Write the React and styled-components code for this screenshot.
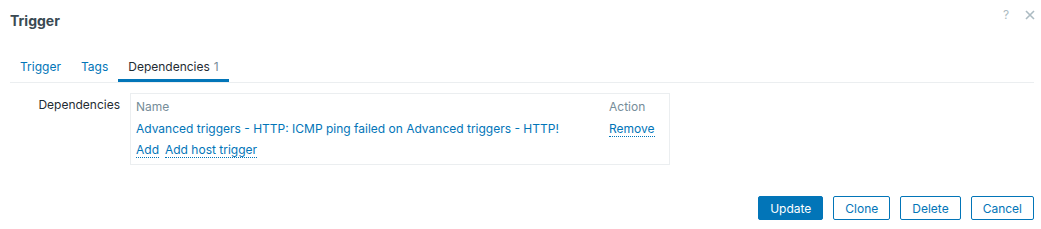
import React from 'react';
import styled, { createGlobalStyle } from 'styled-components';

const GlobalStyle = createGlobalStyle`
  html, body {
    margin: 0;
    padding: 0;
    background: #fff;
  }
  body {
    font-family: Inter, "Noto Sans", Arial, sans-serif;
    font-size: 12px;
    color: #1f2c33;
  }
`;

const Dialog = styled.div`
  width: 1041px;
  height: 229px;
  box-sizing: border-box;
  padding: 10px 7px 0 10px;
  display: flex;
  flex-direction: column;
`;

const Header = styled.div`
  display: flex;
  justify-content: space-between;
  align-items: flex-start;
`;

const Title = styled.h4`
  margin: 0;
  font-size: 14px;
  font-weight: 700;
  line-height: 22px;
  color: #3a4a53;
`;

const HeaderTools = styled.div`
  display: flex;
  gap: 14px;
  margin-right: -1px;
`;

const ToolButton = styled.button`
  border: 0;
  background: none;
  padding: 0;
  width: 10px;
  height: 10px;
  display: flex;
  align-items: center;
  justify-content: center;
  color: #acbbc2;
  font-family: inherit;
  font-size: 12px;
  line-height: 10px;
  cursor: pointer;
`;

const TabList = styled.ul`
  list-style: none;
  margin: 23px 0 0;
  padding: 0;
  display: flex;
  border-bottom: 1px solid #ebeef0;
`;

const Tab = styled.li`
  padding: 0 10px;
  line-height: 24px;
  border-bottom: 3px solid ${(p) => (p.$active ? '#0275b8' : 'transparent')};
  color: ${(p) => (p.$active ? '#1f2c33' : '#0275b8')};
  cursor: pointer;
`;

const Count = styled.span`
  color: #768d99;
  margin-left: 4px;
`;

const FormRow = styled.div`
  display: flex;
  gap: 10px;
  margin-top: 10px;
`;

const Label = styled.label`
  width: 110px;
  padding-top: 2px;
  text-align: right;
  line-height: 20px;
`;

const TableBox = styled.div`
  width: 540px;
  box-sizing: border-box;
  border: 1px solid #ebeef0;
  padding: 1px 5px 3px;
  display: grid;
  grid-template-columns: 1fr 55px;
`;

const HeadCell = styled.div`
  line-height: 24px;
  color: #768d99;
`;

const Cell = styled.div`
  line-height: ${(p) => (p.$tall ? '22px' : '20px')};
  white-space: nowrap;
`;

const Link = styled.a`
  color: #0275b8;
  text-decoration: none;
  cursor: pointer;
`;

const LinkButton = styled.button`
  border: 0;
  background: none;
  padding: 0;
  font-family: inherit;
  font-size: 12px;
  line-height: 14px;
  color: #0275b8;
  border-bottom: 1px dotted #0275b8;
  margin-right: ${(p) => (p.$gap ? '6px' : '0')};
  cursor: pointer;
`;

const Footer = styled.div`
  display: flex;
  justify-content: flex-end;
  gap: 10px;
  margin-top: 31px;
`;

const Button = styled.button`
  height: 24px;
  box-sizing: border-box;
  padding: 0 11px;
  border: 1px solid #0275b8;
  border-radius: 2px;
  background: ${(p) => (p.$primary ? '#0275b8' : '#fff')};
  color: ${(p) => (p.$primary ? '#fff' : '#0275b8')};
  font-family: inherit;
  font-size: 12px;
  cursor: pointer;
`;

export default function App() {
  return (
    <>
      <GlobalStyle />
      <Dialog>
        <Header>
          <Title>Trigger</Title>
          <HeaderTools>
            <ToolButton title="Help">?</ToolButton>
            <ToolButton title="Close">
              <svg width="10" height="10" viewBox="0 0 10 10">
                <path d="M1 1L9 9M9 1L1 9" stroke="currentColor" strokeWidth="1.6" />
              </svg>
            </ToolButton>
          </HeaderTools>
        </Header>

        <TabList>
          <Tab>Trigger</Tab>
          <Tab>Tags</Tab>
          <Tab $active>
            Dependencies<Count>1</Count>
          </Tab>
        </TabList>

        <FormRow>
          <Label>Dependencies</Label>
          <TableBox>
            <HeadCell>Name</HeadCell>
            <HeadCell>Action</HeadCell>
            <Cell>
              <Link>Advanced triggers - HTTP: ICMP ping failed on Advanced triggers - HTTP!</Link>
            </Cell>
            <Cell>
              <LinkButton>Remove</LinkButton>
            </Cell>
            <Cell $tall>
              <LinkButton $gap>Add</LinkButton>
              <LinkButton>Add host trigger</LinkButton>
            </Cell>
          </TableBox>
        </FormRow>

        <Footer>
          <Button $primary>Update</Button>
          <Button>Clone</Button>
          <Button>Delete</Button>
          <Button>Cancel</Button>
        </Footer>
      </Dialog>
    </>
  );
}
